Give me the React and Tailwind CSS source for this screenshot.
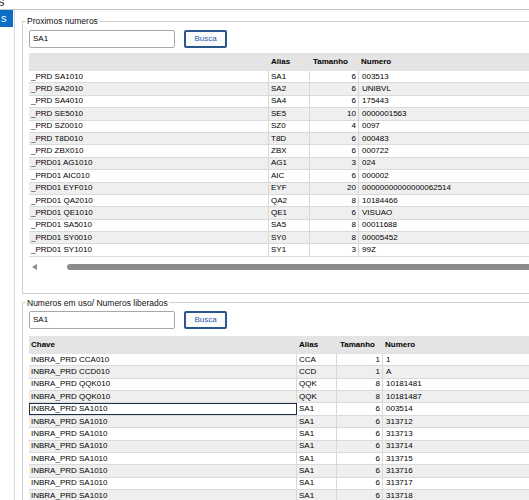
import React from 'react';

const proximos = [
  ['_PRD SA1010', 'SA1', 6, '003513'],
  ['_PRD SA2010', 'SA2', 6, 'UNIBVL'],
  ['_PRD SA4010', 'SA4', 6, '175443'],
  ['_PRD SE5010', 'SE5', 10, '0000001563'],
  ['_PRD SZ0010', 'SZ0', 4, '0097'],
  ['_PRD T8D010', 'T8D', 6, '000483'],
  ['_PRD ZBX010', 'ZBX', 6, '000722'],
  ['_PRD01 AG1010', 'AG1', 3, '024'],
  ['_PRD01 AIC010', 'AIC', 6, '000002'],
  ['_PRD01 EYF010', 'EYF', 20, '00000000000000062514'],
  ['_PRD01 QA2010', 'QA2', 8, '10184466'],
  ['_PRD01 QE1010', 'QE1', 6, 'VISUAO'],
  ['_PRD01 SA5010', 'SA5', 8, '00011688'],
  ['_PRD01 SY0010', 'SY0', 8, '00005452'],
  ['_PRD01 SY1010', 'SY1', 3, '99Z'],
];

const emUso = [
  ['INBRA_PRD CCA010', 'CCA', 1, '1'],
  ['INBRA_PRD CCD010', 'CCD', 1, 'A'],
  ['INBRA_PRD QQK010', 'QQK', 8, '10181481'],
  ['INBRA_PRD QQK010', 'QQK', 8, '10181487'],
  ['INBRA_PRD SA1010', 'SA1', 6, '003514'],
  ['INBRA_PRD SA1010', 'SA1', 6, '313712'],
  ['INBRA_PRD SA1010', 'SA1', 6, '313713'],
  ['INBRA_PRD SA1010', 'SA1', 6, '313714'],
  ['INBRA_PRD SA1010', 'SA1', 6, '313715'],
  ['INBRA_PRD SA1010', 'SA1', 6, '313716'],
  ['INBRA_PRD SA1010', 'SA1', 6, '313717'],
  ['INBRA_PRD SA1010', 'SA1', 6, '313718'],
];

function SearchBar() {
  return (
    <div className="flex items-center gap-[9px]">
      <div className="w-[146px] h-[18px] border border-[#a8a8a8] rounded-[2px] bg-white flex items-center px-[3px] text-[8px] text-black">
        SA1
      </div>
      <button className="w-[43px] h-[18px] border-2 border-[#2a568c] rounded-[2px] bg-[#fbfbfb] text-[8px] text-[#1f5ea8] leading-none">
        Busca
      </button>
    </div>
  );
}

function Grid({ rows, cols, showChave, selected }) {
  return (
    <div className="w-[560px] text-[8px] text-black">
      <div className="flex h-[18px] items-center bg-[#e4e4e4] font-bold">
        <div className={`${cols[0]} pl-[2px]`}>{showChave ? 'Chave' : ''}</div>
        <div className={`${cols[1]} pl-[2px]`}>Alias</div>
        <div className={`${cols[2]} pl-[3px]`}>Tamanho</div>
        <div className="flex-1 pl-[2px]">Numero</div>
      </div>
      {rows.map((r, i) => (
        <div
          key={i}
          className={`flex h-[12.4px] items-center border-b border-[#dadada] ${i % 2 ? 'bg-[#efefef]' : 'bg-white'}`}
        >
          <div
            className={`${cols[0]} h-full flex items-center pl-[2px] border-r border-[#d8d8d8] ${
              i === selected ? 'outline outline-1 -outline-offset-1 outline-[#1c2e4a]' : ''
            }`}
          >
            {r[0]}
          </div>
          <div className={`${cols[1]} h-full flex items-center pl-[2px] border-r border-[#d8d8d8]`}>{r[1]}</div>
          <div className={`${cols[2]} h-full flex items-center justify-end pr-[2px] border-r border-[#d8d8d8]`}>{r[2]}</div>
          <div className="flex-1 h-full flex items-center pl-[3px]">{r[3]}</div>
        </div>
      ))}
    </div>
  );
}

export default function App() {
  return (
    <div
      className="w-[529px] h-[500px] overflow-hidden bg-white flex flex-col"
      style={{ fontFamily: '"Liberation Sans", Arial, sans-serif' }}
    >
      {/* title strip, scrolled mostly out of view */}
      <div className="h-[10px] shrink-0 border-b border-[#c4c4c4] overflow-hidden">
        <div className="text-[13px] leading-[13px] text-[#333] -mt-[5px] -ml-[2px]">s</div>
      </div>

      <div className="flex flex-1 min-h-0">
        {/* side menu */}
        <div className="w-[15px] shrink-0 border-r border-[#d9d9d9] pr-[1px]">
          <div className="h-[17px] bg-[#0b6ec4] text-white text-[11px] leading-[17px] pl-[1px]">s</div>
        </div>

        <div className="flex-1 pl-[7px] flex flex-col">
          <fieldset className="w-[600px] border border-[#d0d0d0] px-[6px] pt-[3px] pb-[16px] mt-[5px]">
            <legend className="-ml-[3px] px-[1px] text-[8.5px] leading-[12px] text-[#111]">Proximos numeros</legend>
            <SearchBar />
            <div className="mt-[5px]">
              <Grid rows={proximos} cols={['w-[240px]', 'w-[41px]', 'w-[49px]']} showChave={false} selected={-1} />
              <div className="h-[20px] flex items-center gap-[30px] pl-[3px]">
                <svg width="5" height="6" viewBox="0 0 5 6">
                  <path d="M0 3 L5 0 L5 6 Z" fill="#8a8a8a" />
                </svg>
                <div className="flex-1 h-[6px] rounded-full bg-[#8c8c8c]" />
              </div>
            </div>
          </fieldset>

          <fieldset className="w-[600px] border border-[#d0d0d0] px-[6px] pt-[2px] mt-[3px]">
            <legend className="-ml-[3px] px-[1px] text-[8.5px] leading-[12px] text-[#111]">
              Numeros em uso/ Numeros liberados
            </legend>
            <SearchBar />
            <div className="mt-[7px]">
              <Grid rows={emUso} cols={['w-[268px]', 'w-[40px]', 'w-[46px]']} showChave selected={4} />
            </div>
          </fieldset>
        </div>
      </div>
    </div>
  );
}
